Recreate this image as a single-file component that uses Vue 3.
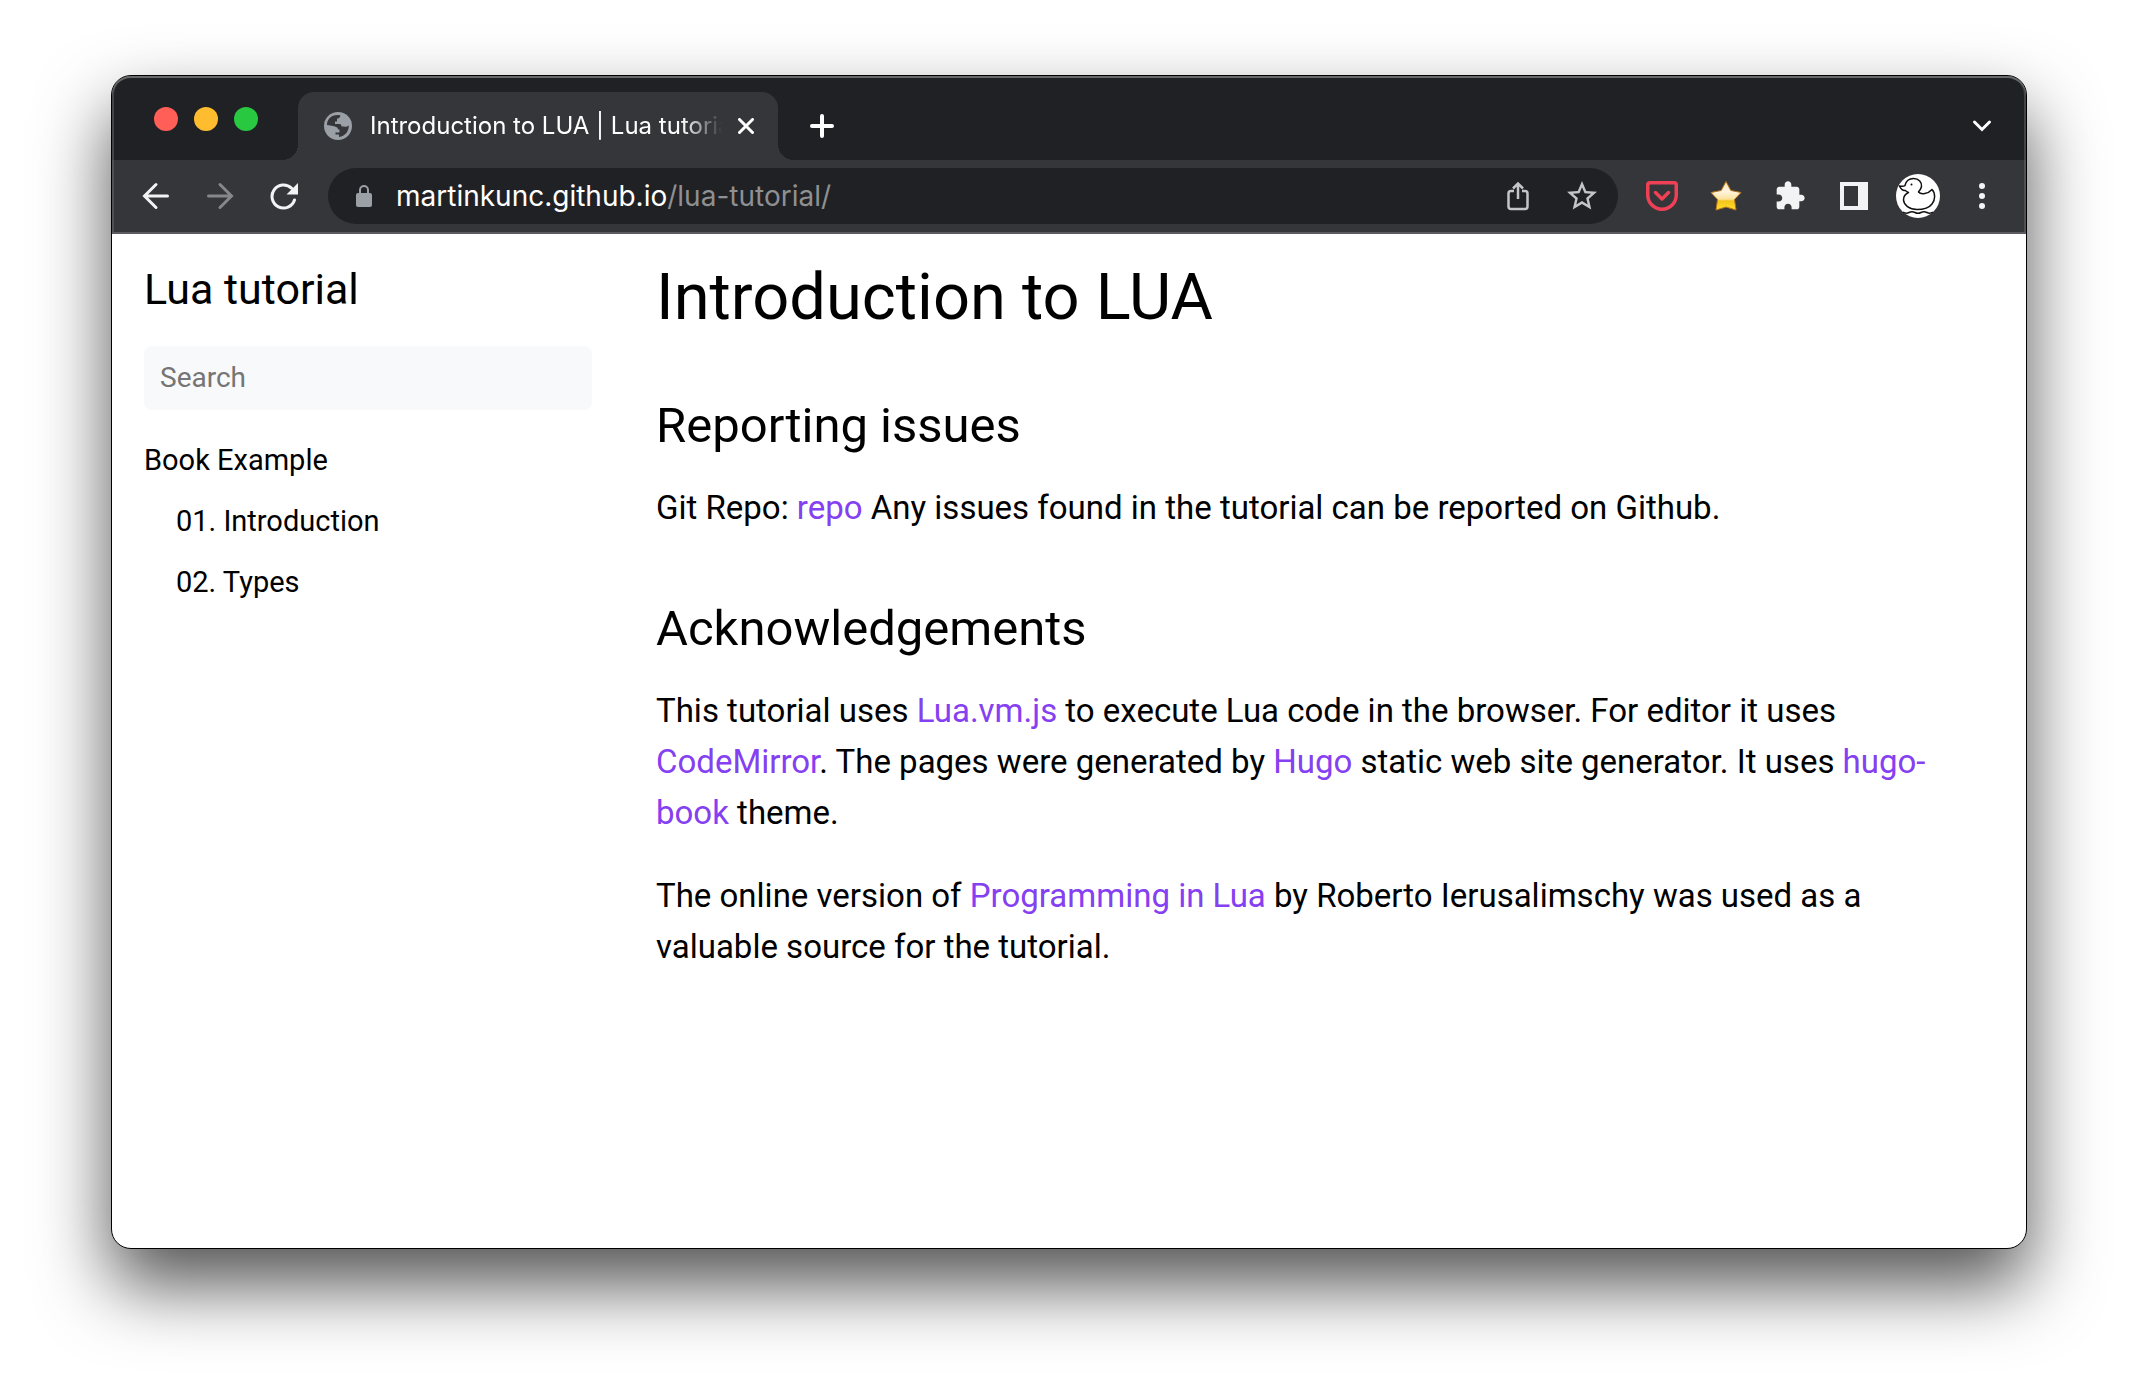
<script setup>
import { ref } from 'vue'

const query = ref('')
const chapters = ['01. Introduction', '02. Types']
</script>

<template>
  <div class="desktop">
    <div class="window">
      <header class="chrome">
        <div class="strip">
          <div class="lights">
            <button class="light red" aria-label="Close window"></button>
            <button class="light amber" aria-label="Minimise window"></button>
            <button class="light green" aria-label="Zoom window"></button>
          </div>
          <div class="tab">
            <svg class="globe" width="28" height="28" viewBox="0 0 28 28">
              <circle cx="14" cy="14" r="14" fill="#9aa0a6" />
              <path d="M3 13C3 8 6 4.200 11 3.200L14.500 3L16.500 3.400C16 5.500 15 6.500 13 6.500V9.500H11V12H15.500C17 12 17.500 13 17.500 14.500H20C21 14.500 22 15.500 24.800 13.500C25 19 21 24.500 15 25V22.500H11V18.500C9 18.500 9 16 8.500 15.500Z" fill="#35363a" />
              <path d="M3 13L9 14C12 15 14 15 14 17.500H15.500V20.500H11.500V25C6 24 2.800 19 3 13Z" fill="#9aa0a6" />
            </svg>
            <span class="tab-title">Introduction to LUA | Lua tutorial</span>
            <button class="plain" aria-label="Close tab">
              <svg width="16" height="16" viewBox="0 0 16 16"><path d="M1.500 1.500L14.500 14.500M14.500 1.500L1.500 14.500" stroke="#fff" stroke-width="3" stroke-linecap="round" /></svg>
            </button>
          </div>
          <button class="plain slot" aria-label="New tab">
            <svg width="24" height="24" viewBox="0 0 24 24"><path d="M12 2V22M2 12H22" stroke="#fff" stroke-width="4" stroke-linecap="round" /></svg>
          </button>
          <button class="plain slot last" aria-label="Search tabs">
            <svg width="20" height="14" viewBox="0 0 20 14"><path d="M2.500 3L10 10.500L17.500 3" fill="none" stroke="#fff" stroke-width="3" stroke-linecap="round" /></svg>
          </button>
        </div>

        <div class="toolbar">
          <button class="plain slot" aria-label="Back">
            <svg width="28" height="28" viewBox="0 0 28 28"><path d="M25.500 14H3M14 2.500L2.500 14L14 25.500" fill="none" stroke="#f1f3f4" stroke-width="3" stroke-linecap="round" /></svg>
          </button>
          <button class="plain slot" aria-label="Forward">
            <svg width="28" height="28" viewBox="0 0 28 28"><path d="M2.500 14H25M14 2.500L25.500 14L14 25.500" fill="none" stroke="#86878a" stroke-width="3" stroke-linecap="round" /></svg>
          </button>
          <button class="plain slot" aria-label="Reload">
            <svg width="28" height="28" viewBox="0 0 28 28"><path d="M24.500 18A11.500 11.500 0 1 1 21.500 6.200" fill="none" stroke="#f1f3f4" stroke-width="3" stroke-linecap="round" /><path d="M28 1V12.500H16.500Z" fill="#f1f3f4" /></svg>
          </button>
          <div class="omnibox">
            <svg width="16" height="22" viewBox="0 0 16 22"><rect y="8" width="16" height="14" rx="2" fill="#9aa0a6" /><path d="M4 9V5A4 4 0 0 1 12 5V9" fill="none" stroke="#9aa0a6" stroke-width="2" /></svg>
            <div class="url" role="textbox" aria-label="Address">martinkunc.github.io<span class="path">/lua-tutorial/</span></div>
            <button class="plain slot" aria-label="Share">
              <svg width="22" height="30" viewBox="0 0 22 30"><path d="M7 10H4Q1.500 10 1.500 12.500V25.500Q1.500 28 4 28H18Q20.500 28 20.500 25.500V12.500Q20.500 10 18 10H15M11 18V3M6 7.500L11 2.500L16 7.500" fill="none" stroke="#c4c5c6" stroke-width="2.500" /></svg>
            </button>
            <button class="plain slot" aria-label="Bookmark this tab">
              <svg width="36" height="36" viewBox="0 0 24 24"><path fill="#c4c5c6" d="M22 9.240l-7.190-.62L12 2 9.190 8.630 2 9.240l5.460 4.730L5.820 21 12 17.270 18.180 21l-1.630-7.030L22 9.240zM12 15.400l-3.760 2.270 1-4.280-3.320-2.880 4.380-.38L12 6.100l1.710 4.040 4.380.38-3.320 2.880 1 4.280L12 15.400z" /></svg>
            </button>
          </div>
          <button class="plain slot" aria-label="Pocket">
            <svg width="32" height="30" viewBox="0 0 32 30"><path d="M4 1.750H28Q30.250 1.750 30.250 4V14A14.250 14.250 0 0 1 1.750 14V4Q1.750 1.750 4 1.750Z" fill="none" stroke="#ef4056" stroke-width="3.500" /><path d="M9.500 11.500L16 18L22.500 11.500" fill="none" stroke="#ef4056" stroke-width="3.500" stroke-linecap="round" stroke-linejoin="round" /></svg>
          </button>
          <button class="plain slot" aria-label="Starred">
            <svg width="32" height="32" viewBox="0 0 32 32">
              <defs><linearGradient id="gold" x1="0" y1="0" x2="0" y2="1"><stop offset="0" stop-color="#ffe3a6" /><stop offset=".35" stop-color="#fff4e0" /><stop offset=".62" stop-color="#fbe29a" /><stop offset=".68" stop-color="#f3c41c" /><stop offset="1" stop-color="#ffe02e" /></linearGradient></defs>
              <path d="M16 1.500L20.800 10.500L31 12.500L24.500 19.500L26 30L16 27L6 30L7.500 19.500L1 12.500L11.200 10.500Z" fill="url(#gold)" stroke="#b9771c" stroke-width="1" stroke-linejoin="round" />
            </svg>
          </button>
          <button class="plain slot" aria-label="Extensions">
            <svg width="32" height="32" viewBox="0 0 24 24"><path fill="#f1f3f4" d="M20.500 11H19V7c0-1.100-.9-2-2-2h-4V3.500C13 2.120 11.880 1 10.500 1S8 2.120 8 3.500V5H4c-1.100 0-1.990.9-1.990 2v3.800H3.500c1.490 0 2.700 1.210 2.700 2.700s-1.210 2.700-2.700 2.700H2V20c0 1.100.9 2 2 2h3.800v-1.500c0-1.490 1.210-2.700 2.700-2.700s2.700 1.210 2.700 2.700V22H17c1.100 0 2-.9 2-2v-4h1.500c1.380 0 2.500-1.120 2.500-2.500S21.880 11 20.500 11z" /></svg>
          </button>
          <button class="plain slot" aria-label="Side panel">
            <svg width="28" height="28" viewBox="0 0 28 28"><path fill="#f1f3f4" fill-rule="evenodd" d="M0 0H28V28H0ZM4 4V24H18V4Z" /></svg>
          </button>
          <button class="plain slot" aria-label="Profile">
            <svg width="44" height="44" viewBox="0 0 44 44">
              <circle cx="22" cy="22" r="22" fill="#fff" />
              <path d="M9 11.500C10 7 13.500 4.500 17.500 4.500C23 4.500 26 8.500 25.500 12.500C25 15 23.500 16.500 22.500 18C25 21 32 20 36 15.500C39.500 19 39.500 26 36 30C33 34 27 35.500 21 35.500C13 35.500 8 31 7.500 26C7.500 22 9 20 12.500 18.500C11 18 10 17.500 9.500 16.500C6.500 17 5 15.500 3.500 12C6 12.500 8 12.500 9 11.500Z" fill="none" stroke="#111" stroke-width="1.500" stroke-linejoin="round" />
              <circle cx="15.500" cy="10.500" r="1" fill="#111" />
              <path d="M7 38Q10 40 13 38.500T19 38.500T25 38.500T31 38.500T37 38" fill="none" stroke="#111" stroke-width="1.500" />
            </svg>
          </button>
          <button class="plain slot" aria-label="Menu">
            <svg width="6" height="26" viewBox="0 0 6 26" fill="#f1f3f4"><circle cx="3" cy="3" r="3" /><circle cx="3" cy="13" r="3" /><circle cx="3" cy="23" r="3" /></svg>
          </button>
        </div>
      </header>

      <div class="page">
        <aside class="sidebar">
          <a class="brand" href="#">Lua tutorial</a>
          <input v-model="query" class="search" type="text" placeholder="Search" aria-label="Search" />
          <nav class="menu">
            <a href="#">Book Example</a>
            <ul>
              <li v-for="chapter in chapters" :key="chapter"><a href="#">{{ chapter }}</a></li>
            </ul>
          </nav>
        </aside>
        <main class="article">
          <h1>Introduction to LUA</h1>
          <h2>Reporting issues</h2>
          <p>Git Repo: <a href="#">repo</a> Any issues found in the tutorial can be reported on Github.</p>
          <h2>Acknowledgements</h2>
          <p>This tutorial uses <a href="#">Lua.vm.js</a> to execute Lua code in the browser. For editor it uses <a href="#">CodeMirror</a>. The pages were generated by <a href="#">Hugo</a> static web site generator. It uses <a href="#">hugo-book</a> theme.</p>
          <p>The online version of <a href="#">Programming in Lua</a> by Roberto Ierusalimschy was used as a valuable source for the tutorial.</p>
        </main>
      </div>
    </div>
  </div>
</template>

<style>
body {
  margin: 0;
  background: #fff;
}
</style>

<style scoped>
* {
  box-sizing: border-box;
}

.desktop {
  display: flex;
  min-height: 100vh;
  padding: 75px 111px 147px;
  overflow: hidden;
  font-family: Roboto, sans-serif;
  color: #000;
}

.window {
  display: flex;
  flex: 1;
  flex-direction: column;
  min-width: 0;
  border: 1px solid #000;
  border-radius: 20px;
  background: #fff;
  box-shadow: 0 36px 72px rgba(0, 0, 0, 0.68);
}

.chrome {
  border-bottom: 2px solid #5c5d60;
  border-radius: 19px 19px 0 0;
  background: #35363a;
  font-family: Inter, sans-serif;
}

.strip {
  display: flex;
  align-items: center;
  padding: 16px 12px 0 42px;
  border-radius: 19px 19px 0 0;
  background: #202124;
  box-shadow: inset 0 2px 0 #68696b, inset 2px 0 0 #434447, inset -2px 0 0 #434447;
}

.lights {
  display: flex;
  gap: 16px;
  margin: 0 40px 14px 0;
}

.light {
  width: 24px;
  height: 24px;
  padding: 0;
  border: 0;
  border-radius: 50%;
}

.red { background: #ff5f57; }
.amber { background: #febc2e; }
.green { background: #28c840; }

.tab {
  position: relative;
  display: flex;
  align-items: center;
  gap: 16px;
  width: 480px;
  height: 68px;
  padding: 0 24px 0 26px;
  border-radius: 16px 16px 0 0;
  background: #35363a;
  color: #fff;
}

.tab::before,
.tab::after {
  position: absolute;
  bottom: 0;
  width: 16px;
  height: 16px;
  content: '';
}

.tab::before {
  right: 100%;
  background: radial-gradient(circle at 0 0, transparent 16px, #35363a 16px);
}

.tab::after {
  left: 100%;
  background: radial-gradient(circle at 100% 0, transparent 16px, #35363a 16px);
}

.globe {
  flex: none;
}

.tab-title {
  flex: 1;
  padding-left: 2px;
  overflow: hidden;
  font-size: 24px;
  line-height: 32px;
  white-space: nowrap;
  mask-image: linear-gradient(90deg, #000 calc(100% - 40px), transparent);
}

.plain {
  display: flex;
  flex: none;
  align-items: center;
  justify-content: center;
  padding: 0;
  border: 0;
  background: none;
}

.slot {
  width: 64px;
  height: 56px;
}

.tab + .slot {
  margin-left: 12px;
}

.strip .last {
  margin-left: auto;
}

.toolbar {
  display: flex;
  align-items: center;
  padding: 8px 12px;
  box-shadow: inset 2px 0 0 #505155, inset -2px 0 0 #505155;
}

.omnibox {
  display: flex;
  flex: 1;
  align-items: center;
  height: 56px;
  margin: 0 12px;
  padding: 0 4px 0 28px;
  border-radius: 28px;
  background: #202124;
}

.url {
  flex: 1;
  margin-left: 24px;
  color: #fff;
  font-size: 28px;
  line-height: 40px;
  white-space: nowrap;
}

.path {
  color: #8f9092;
}

.page {
  display: flex;
}

.sidebar {
  flex: none;
  width: 512px;
  padding: 32px;
}

a {
  color: #8440f1;
  text-decoration: none;
}

.sidebar a {
  display: block;
  color: #000;
}

.sidebar .brand {
  font-size: 43px;
  line-height: 46px;
}

.search {
  display: block;
  width: 100%;
  height: 64px;
  margin: 34px 0 28px;
  padding: 0 16px 2px;
  border: 0;
  border-radius: 8px;
  background: #f8f9fa;
  color: #000;
  font-family: inherit;
  font-size: 28px;
}

.search::placeholder {
  color: #757575;
}

.menu {
  font-size: 29px;
  line-height: 45px;
}

.menu ul {
  margin: 0;
  padding-left: 32px;
  list-style: none;
}

.menu li {
  margin-top: 16px;
}

.article {
  flex: 1;
  min-width: 0;
  padding: 32px 48px 32px 32px;
}

h1,
h2 {
  margin: 0;
  font-weight: 400;
}

h1 {
  font-size: 65px;
  line-height: 62px;
}

h2 {
  margin-top: 72px;
  font-size: 49px;
  line-height: 48px;
}

h1 + h2 {
  margin-top: 74px;
}

p {
  margin: 32px 0 0;
  font-size: 33px;
  line-height: 51px;
}
</style>
